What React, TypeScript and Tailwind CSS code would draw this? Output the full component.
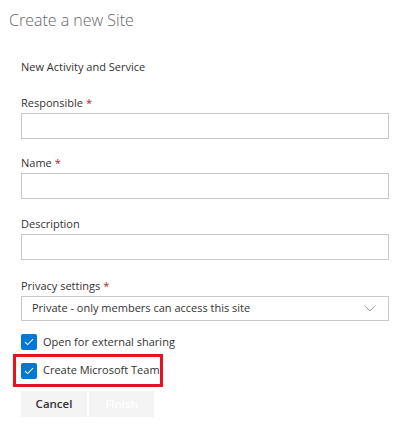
import React from "react";

const Label = ({ text, required }: { text: string; required?: boolean }) => (
  <div className="h-[16px] text-[11px] leading-[16px] text-[#333]">
    {text}
    {required && <span className="ml-[3px] text-[#a4262c]">*</span>}
  </div>
);

const TextInput = () => (
  <input
    type="text"
    className="mt-[2px] block h-[26px] w-full border border-[#c8c8c8] bg-white px-2 text-[11px] outline-none"
  />
);

const Check = ({ text }: { text: string }) => (
  <label className="flex h-[16px] items-center gap-[6px] whitespace-nowrap text-[11px] text-[#333]">
    <span className="flex h-[16px] w-[16px] shrink-0 items-center justify-center rounded-[2px] bg-[#0078d4]">
      <svg width="10" height="8" viewBox="0 0 10 8" fill="none">
        <path d="M1 4.2 L3.6 6.6 L9 1.2" stroke="white" strokeWidth="1.1" />
      </svg>
    </span>
    {text}
  </label>
);

export default function App() {
  return (
    <div
      className="h-[431px] w-[400px] bg-white"
      style={{ fontFamily: "'Open Sans', 'Noto Sans', sans-serif" }}
    >
      <h1 className="pl-[9px] pt-[8px] text-[16px] font-light leading-[24px] text-[#666]">
        Create a new Site
      </h1>

      <div className="pl-[21px] pr-[11px]">
        <div className="mt-[26px] h-[18px] text-[11px] leading-[18px] text-[#333]">
          New Activity and Service
        </div>

        <div className="mt-[19px]">
          <Label text="Responsible" required />
          <TextInput />
        </div>

        <div className="mt-[16px]">
          <Label text="Name" required />
          <TextInput />
        </div>

        <div className="mt-[17px]">
          <Label text="Description" />
          <TextInput />
        </div>

        <div className="mt-[18px]">
          <Label text="Privacy settings" required />
          <div className="mt-[2px] flex h-[25px] items-center justify-between border border-[#c8c8c8] pl-[10px] pr-[12px] text-[11px] text-[#333]">
            <span>Private - only members can access this site</span>
            <svg width="12" height="7" viewBox="0 0 12 7" fill="none">
              <path d="M0.5 0.5 L6 6 L11.5 0.5" stroke="#999" strokeWidth="0.9" />
            </svg>
          </div>
        </div>

        <div className="mt-[13px]">
          <Check text="Open for external sharing" />
        </div>
      </div>

      <div className="ml-[13px] mt-[4px] flex h-[33px] w-[150px] items-center border-[3px] border-[#e81123] pl-[5px]">
        <Check text="Create Microsoft Team" />
      </div>

      <div className="ml-[21px] mt-[4px] flex gap-[2px]">
        <button className="h-[26px] w-[66px] bg-[#f4f4f4] text-[11.5px] font-semibold text-[#333]">
          Cancel
        </button>
        <button className="h-[26px] w-[65px] bg-[#f4f4f4] text-[11.5px] font-semibold text-white">
          Finish
        </button>
      </div>
    </div>
  );
}
